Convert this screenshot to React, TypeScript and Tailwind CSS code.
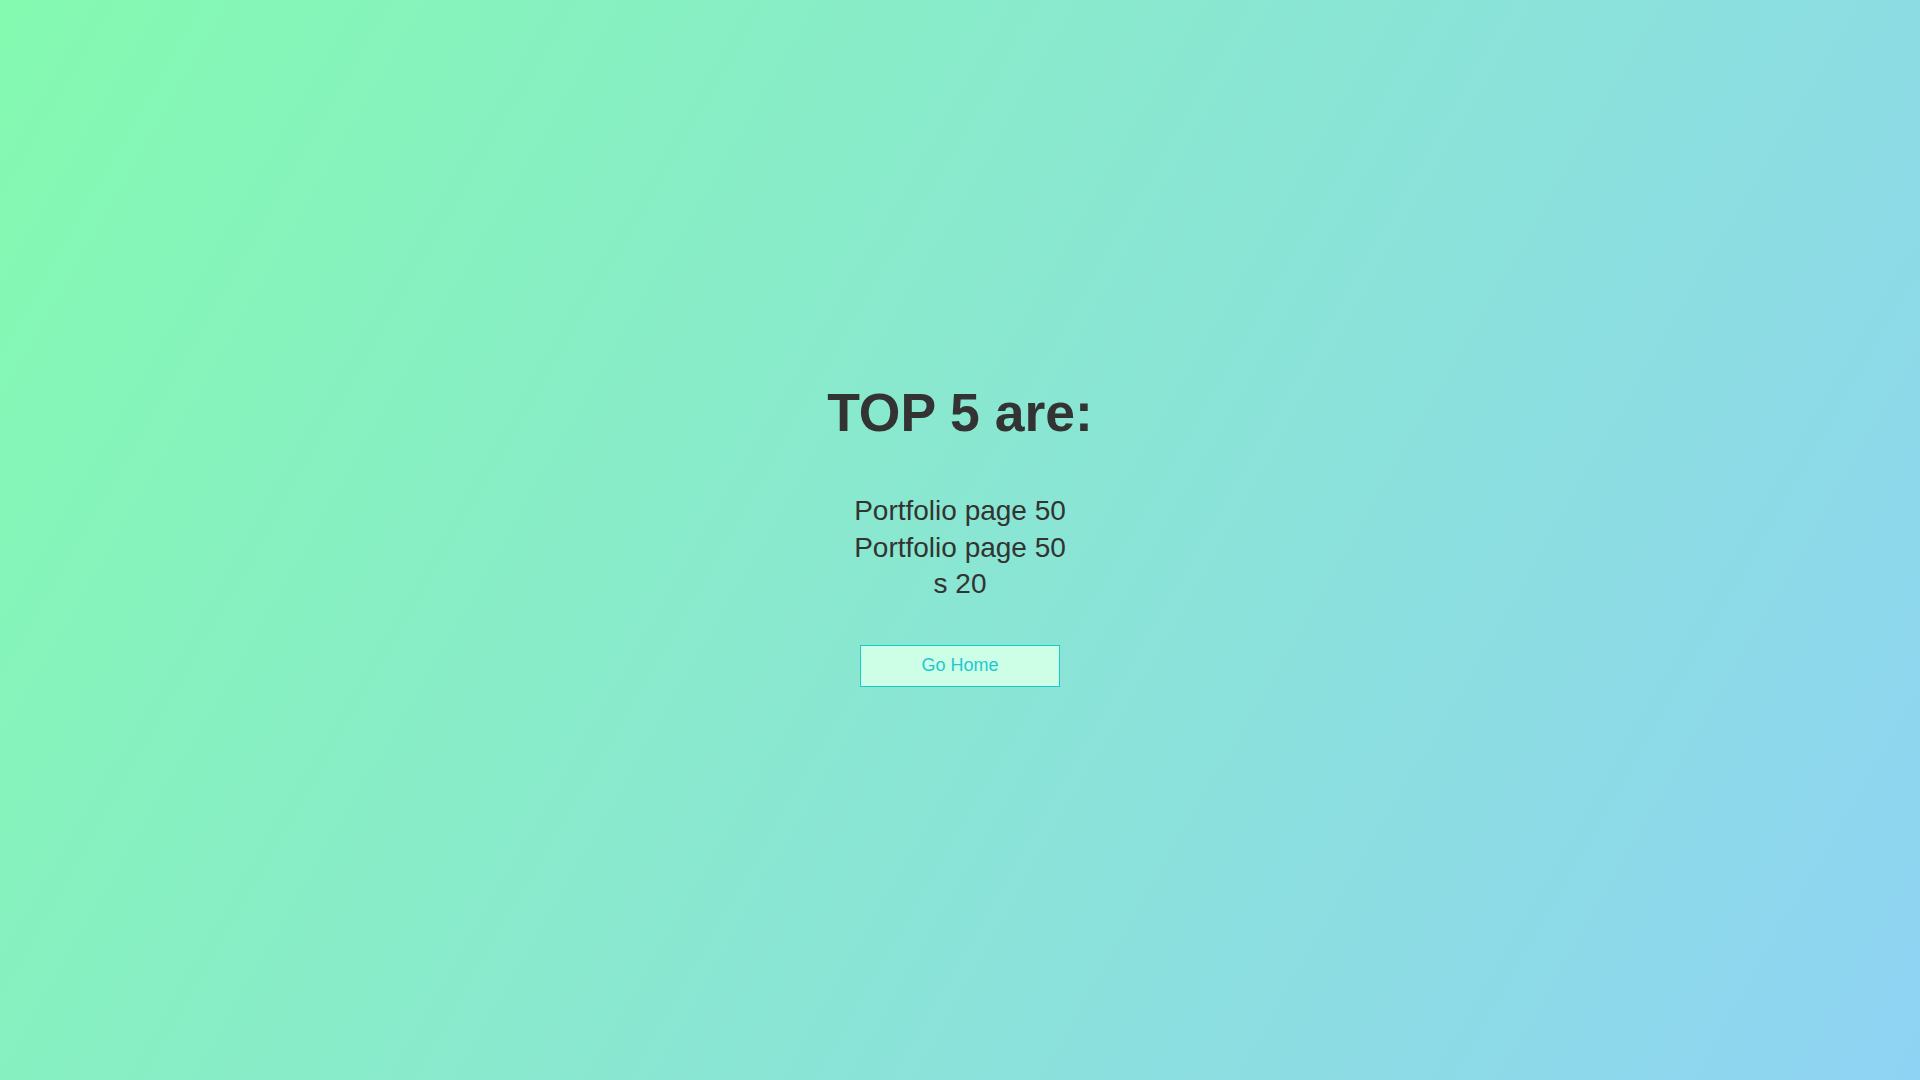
export default function App() {
  return (
    <div
      className="w-full h-[1080px] flex flex-col items-center pt-[386px] bg-[linear-gradient(120deg,#84fab0_0%,#8fd3f4_100%)] text-[#333333]"
      style={{ fontFamily: '"Liberation Sans", Arial, sans-serif' }}
    >
      <h1 className="text-[53.5px] font-bold leading-none m-0 h-[53px]">TOP 5 are:</h1>
      <div className="mt-[54px] flex flex-col items-center text-[28px] leading-[36.5px]">
        <div>Portfolio page 50</div>
        <div>Portfolio page 50</div>
        <div>s 20</div>
      </div>
      <button className="mt-[42px] w-[200px] h-[42px] bg-[#ccffe6] border border-[#1cc9c9] text-[#1fc8d0] text-[18px]">
        Go Home
      </button>
    </div>
  );
}
